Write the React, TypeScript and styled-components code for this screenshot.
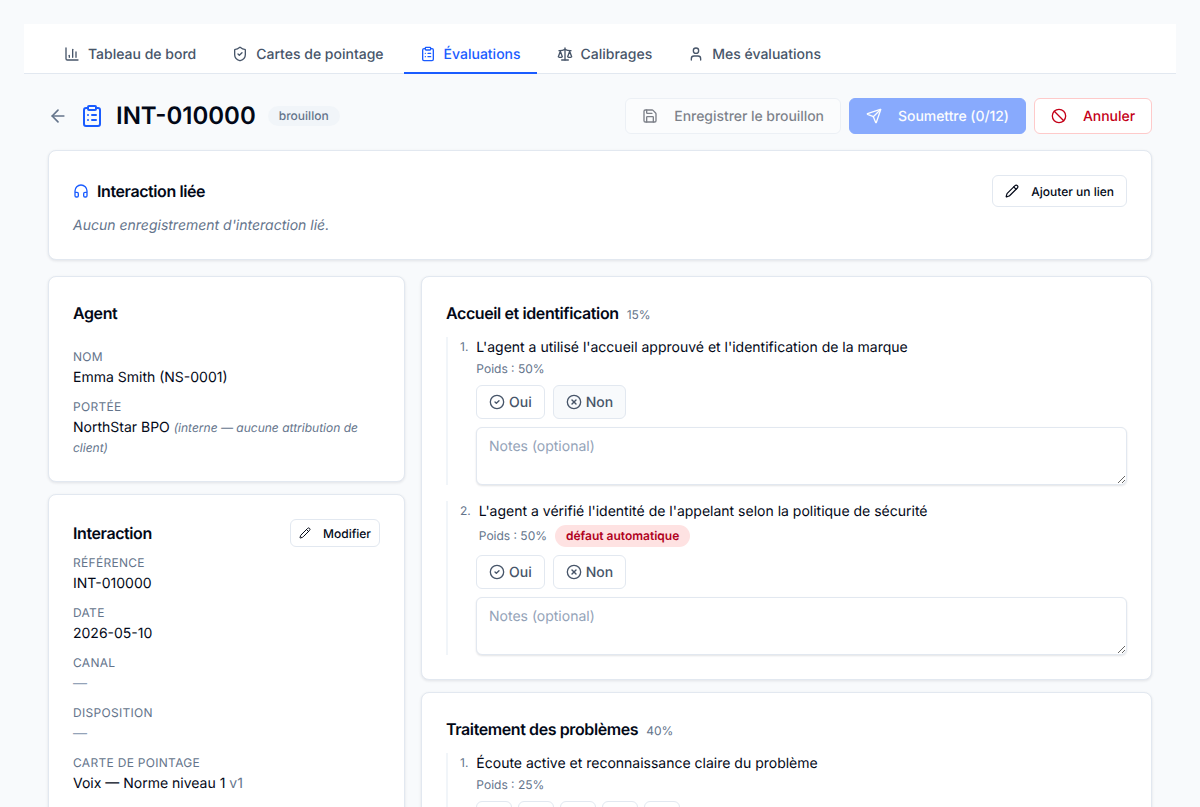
import React from 'react'
import styled, { createGlobalStyle } from 'styled-components'
import {
  ArrowLeft,
  Ban,
  ChartColumn,
  CircleCheck,
  CircleX,
  ClipboardList,
  Headphones,
  Pencil,
  Save,
  Scale,
  Send,
  ShieldCheck,
  User,
} from 'lucide-react'

const GlobalStyle = createGlobalStyle`
  * { box-sizing: border-box; text-rendering: geometricPrecision; }
  html, body { margin: 0; padding: 0; background: #f8fafc; }
  body {
    font-family: Inter, 'Liberation Sans', sans-serif;
    color: #020817;
    font-size: 14px;
  }
`

const Page = styled.div`
  padding: 24px;
`

const Nav = styled.nav`
  display: flex;
  gap: 4px;
  height: 50px;
  padding: 0 24px;
  background: #fff;
  border-bottom: 1px solid #e2e8f0;
`

const Tab = styled.a<{ $active?: boolean }>`
  display: flex;
  align-items: center;
  gap: 8px;
  height: 50px;
  padding: 12px 16px 0;
  font-size: 14px;
  font-weight: 500;
  color: ${p => (p.$active ? '#1a5cff' : '#475569')};
  border-bottom: 2px solid ${p => (p.$active ? '#1a5cff' : 'transparent')};
`

const Main = styled.main`
  display: flex;
  flex-direction: column;
  padding: 24px 24px 0;
`

const Header = styled.header`
  display: flex;
  align-items: center;
  justify-content: space-between;
  height: 36px;
  margin-bottom: 16px;
`

const TitleGroup = styled.div`
  display: flex;
  align-items: center;
  color: #64748b;
`

const TitleIcon = styled.span`
  display: flex;
  margin: 0 12px;
  color: #1a5cff;
`

const PageTitle = styled.h1`
  margin: 0;
  font-size: 24px;
  line-height: 32px;
  font-weight: 600;
  color: #020817;
`

const StatusBadge = styled.span`
  margin-left: 12px;
  padding: 2px 11px;
  height: 20px;
  line-height: 16px;
  border-radius: 10px;
  background: #f1f5f9;
  color: #64748b;
  font-size: 12px;
  font-weight: 500;
`

const Actions = styled.div`
  display: flex;
  gap: 8px;
`

const ActionButton = styled.button<{ $variant: 'outline' | 'primary' | 'danger' }>`
  display: flex;
  align-items: center;
  gap: 16px;
  height: 36px;
  padding: 0 16px;
  border-radius: 6px;
  font-family: inherit;
  font-size: 14px;
  font-weight: 500;
  letter-spacing: -0.05px;
  border: 1px solid
    ${p => (p.$variant === 'primary' ? '#1a5cff' : p.$variant === 'danger' ? '#fecaca' : '#e2e8f0')};
  background: ${p => (p.$variant === 'primary' ? '#1a5cff' : '#fff')};
  color: ${p => (p.$variant === 'primary' ? '#fff' : p.$variant === 'danger' ? '#c40018' : '#020817')};
  opacity: ${p => (p.$variant === 'danger' ? 1 : 0.5)};
`

const Card = styled.section`
  background: #fff;
  border: 1px solid #e2e8f0;
  border-radius: 8px;
  box-shadow: 0 1px 3px rgba(15, 23, 42, 0.1);
  padding: 24px;
`

const CardHead = styled.div`
  display: flex;
  align-items: center;
  justify-content: space-between;
`

const CardTitle = styled.h3`
  display: flex;
  align-items: center;
  gap: 8px;
  margin: 0;
  font-size: 16px;
  line-height: 24px;
  font-weight: 600;
  letter-spacing: -0.4px;
  color: #020817;

  svg {
    color: #1a5cff;
  }
`

const SmallButton = styled.button<{ $h: number }>`
  display: flex;
  align-items: center;
  gap: 12px;
  height: ${p => p.$h}px;
  padding: 0 ${p => (p.$h === 32 ? 12 : 8)}px;
  background: #fff;
  border: 1px solid #e2e8f0;
  border-radius: 6px;
  font-family: inherit;
  font-size: 12px;
  font-weight: 500;
  color: #020817;
`

const EmptyNote = styled.p`
  margin: 9px 0 -1px;
  font-size: 14px;
  line-height: 20px;
  font-style: italic;
  color: #64748b;
`

const Columns = styled.div`
  display: grid;
  grid-template-columns: 357px 1fr;
  gap: 16px;
  margin-top: 16px;
  align-items: start;
`

const Stack = styled.div`
  display: flex;
  flex-direction: column;
  gap: 12px;
`

const FieldList = styled.dl<{ $top: number }>`
  margin: ${p => p.$top}px 0 -1px;
  display: flex;
  flex-direction: column;
  gap: 11px;
`

const Field = styled.div``

const FieldLabel = styled.dt`
  font-size: 12px;
  line-height: 16px;
  letter-spacing: 0.3px;
  text-transform: uppercase;
  color: #64748b;
  margin-bottom: 3px;
`

const FieldValue = styled.dd<{ $muted?: boolean }>`
  margin: 0;
  font-size: 14px;
  line-height: 20px;
  color: ${p => (p.$muted ? '#94a3b8' : '#020817')};
`

const ValueNote = styled.em`
  font-size: 12px;
  color: #64748b;
`

const Version = styled.span`
  color: #64748b;
`

const SectionTitle = styled.div`
  display: flex;
  align-items: baseline;
  gap: 8px;
  margin-bottom: 12px;
`

const SectionName = styled.h3`
  margin: 0;
  font-size: 16px;
  line-height: 24px;
  font-weight: 600;
  letter-spacing: -0.4px;
`

const SectionWeight = styled.span`
  font-size: 12px;
  color: #64748b;
`

const Question = styled.div`
  padding-left: 12px;
  border-left: 2px solid #f1f5f9;

  & + & {
    margin-top: 16px;
  }
`

const QuestionHead = styled.div`
  display: flex;
  gap: 8px;
`

const QuestionNum = styled.span`
  font-size: 12px;
  line-height: 20px;
  color: #64748b;
`

const QuestionText = styled.div`
  font-size: 14px;
  line-height: 22px;
  color: #020817;
`

const Meta = styled.div`
  display: flex;
  align-items: center;
  gap: 8px;
  margin-top: 2px;
  font-size: 12px;
  line-height: 16px;
  color: #64748b;
`

const AutoFail = styled.span`
  padding: 0 11px;
  height: 22px;
  line-height: 22px;
  border-radius: 11px;
  background: #fee2e2;
  color: #b00020;
  font-weight: 600;
`

const Answers = styled.div`
  display: flex;
  gap: 8px;
  margin: 8px 0 8px 16px;
`

const AnswerButton = styled.button<{ $hover?: boolean }>`
  display: flex;
  align-items: center;
  gap: 4px;
  height: 34px;
  padding: 0 12px;
  background: ${p => (p.$hover ? '#f8fafc' : '#fff')};
  border: 1px solid #e2e8f0;
  border-radius: 6px;
  font-family: inherit;
  font-size: 14px;
  font-weight: 500;
  color: #475569;
`

const ScoreRow = styled.div`
  display: flex;
  gap: 6px;
  margin: 8px 0 8px 16px;
`

const ScoreButton = styled.button`
  width: 36px;
  height: 34px;
  background: #fff;
  border: 1px solid #e2e8f0;
  border-radius: 6px;
  font-family: inherit;
  font-size: 14px;
  color: #475569;
`

const Notes = styled.textarea`
  display: block;
  width: calc(100% - 16px);
  height: 58px;
  margin-left: 16px;
  padding: 9px 12px 7px;
  border: 1px solid #e2e8f0;
  border-radius: 6px;
  box-shadow: 0 1px 2px rgba(15, 23, 42, 0.12);
  background: #fff;
  font-family: inherit;
  font-size: 14px;
  line-height: 20px;
  color: #020817;

  &::placeholder {
    color: #94a3b8;
  }
`

const tabs = [
  { label: 'Tableau de bord', icon: ChartColumn },
  { label: 'Cartes de pointage', icon: ShieldCheck },
  { label: 'Évaluations', icon: ClipboardList, active: true },
  { label: 'Calibrages', icon: Scale },
  { label: 'Mes évaluations', icon: User },
]

const interactionFields = [
  { label: 'Référence', value: 'INT-010000' },
  { label: 'Date', value: '2026-05-10' },
  { label: 'Canal', value: '—', muted: true },
  { label: 'Disposition', value: '—', muted: true },
]

function YesNo({ hoverNo }: { hoverNo?: boolean }) {
  return (
    <Answers>
      <AnswerButton>
        <CircleCheck size={16} />
        Oui
      </AnswerButton>
      <AnswerButton $hover={hoverNo}>
        <CircleX size={16} />
        Non
      </AnswerButton>
    </Answers>
  )
}

export default function App() {
  return (
    <Page>
      <GlobalStyle />
      <Nav>
        {tabs.map(t => (
          <Tab key={t.label} $active={t.active}>
            <t.icon size={16} />
            {t.label}
          </Tab>
        ))}
      </Nav>
      <Main>
        <Header>
          <TitleGroup>
            <ArrowLeft size={20} />
            <TitleIcon>
              <ClipboardList size={24} />
            </TitleIcon>
            <PageTitle>INT-010000</PageTitle>
            <StatusBadge>brouillon</StatusBadge>
          </TitleGroup>
          <Actions>
            <ActionButton $variant="outline">
              <Save size={16} />
              Enregistrer le brouillon
            </ActionButton>
            <ActionButton $variant="primary">
              <Send size={16} />
              Soumettre (0/12)
            </ActionButton>
            <ActionButton $variant="danger">
              <Ban size={16} />
              Annuler
            </ActionButton>
          </Actions>
        </Header>

        <Card>
          <CardHead>
            <CardTitle>
              <Headphones size={16} />
              Interaction liée
            </CardTitle>
            <SmallButton $h={32}>
              <Pencil size={14} />
              Ajouter un lien
            </SmallButton>
          </CardHead>
          <EmptyNote>Aucun enregistrement d'interaction lié.</EmptyNote>
        </Card>

        <Columns>
          <Stack>
            <Card>
              <CardTitle>Agent</CardTitle>
              <FieldList $top={24}>
                <Field>
                  <FieldLabel>Nom</FieldLabel>
                  <FieldValue>Emma Smith (NS-0001)</FieldValue>
                </Field>
                <Field>
                  <FieldLabel>Portée</FieldLabel>
                  <FieldValue>
                    NorthStar BPO <ValueNote>(interne — aucune attribution de client)</ValueNote>
                  </FieldValue>
                </Field>
              </FieldList>
            </Card>
            <Card>
              <CardHead>
                <CardTitle>Interaction</CardTitle>
                <SmallButton $h={28}>
                  <Pencil size={12} />
                  Modifier
                </SmallButton>
              </CardHead>
              <FieldList $top={8}>
                {interactionFields.map(f => (
                  <Field key={f.label}>
                    <FieldLabel>{f.label}</FieldLabel>
                    <FieldValue $muted={f.muted}>{f.value}</FieldValue>
                  </Field>
                ))}
                <Field>
                  <FieldLabel>Carte de pointage</FieldLabel>
                  <FieldValue>
                    Voix — Norme niveau 1 <Version>v1</Version>
                  </FieldValue>
                </Field>
              </FieldList>
            </Card>
          </Stack>

          <Stack>
            <Card>
              <SectionTitle>
                <SectionName>Accueil et identification</SectionName>
                <SectionWeight>15%</SectionWeight>
              </SectionTitle>
              <Question>
                <QuestionHead>
                  <QuestionNum>1.</QuestionNum>
                  <div>
                    <QuestionText>L'agent a utilisé l'accueil approuvé et l'identification de la marque</QuestionText>
                    <Meta>Poids : 50%</Meta>
                  </div>
                </QuestionHead>
                <YesNo hoverNo />
                <Notes placeholder="Notes (optional)" />
              </Question>
              <Question>
                <QuestionHead>
                  <QuestionNum>2.</QuestionNum>
                  <div>
                    <QuestionText>L'agent a vérifié l'identité de l'appelant selon la politique de sécurité</QuestionText>
                    <Meta>
                      Poids : 50%
                      <AutoFail>défaut automatique</AutoFail>
                    </Meta>
                  </div>
                </QuestionHead>
                <YesNo />
                <Notes placeholder="Notes (optional)" />
              </Question>
            </Card>
            <Card>
              <SectionTitle>
                <SectionName>Traitement des problèmes</SectionName>
                <SectionWeight>40%</SectionWeight>
              </SectionTitle>
              <Question>
                <QuestionHead>
                  <QuestionNum>1.</QuestionNum>
                  <div>
                    <QuestionText>Écoute active et reconnaissance claire du problème</QuestionText>
                    <Meta>Poids : 25%</Meta>
                  </div>
                </QuestionHead>
                <ScoreRow>
                  {[1, 2, 3, 4, 5].map(n => (
                    <ScoreButton key={n}>{n}</ScoreButton>
                  ))}
                </ScoreRow>
              </Question>
            </Card>
          </Stack>
        </Columns>
      </Main>
    </Page>
  )
}
